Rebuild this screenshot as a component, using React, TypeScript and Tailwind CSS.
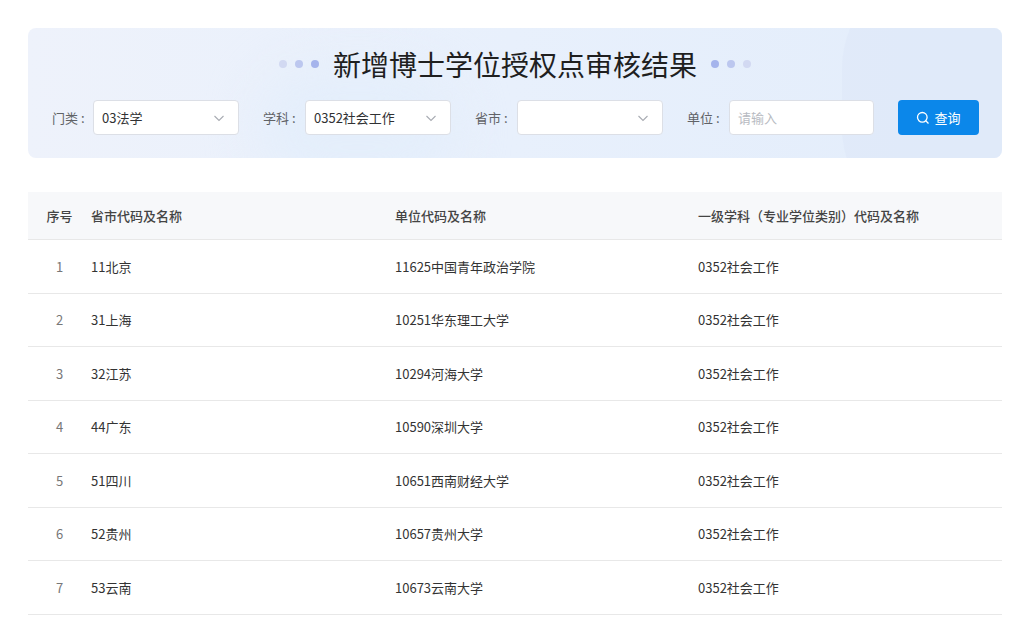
export default function App() {
  const rows = [
    ["1", "11北京", "11625中国青年政治学院"],
    ["2", "31上海", "10251华东理工大学"],
    ["3", "32江苏", "10294河海大学"],
    ["4", "44广东", "10590深圳大学"],
    ["5", "51四川", "10651西南财经大学"],
    ["6", "52贵州", "10657贵州大学"],
    ["7", "53云南", "10673云南大学"],
  ];
  const font = { fontFamily: '"Noto Sans CJK SC", "Noto Sans", sans-serif' };
  const Chevron = () => (
    <svg width="14" height="14" viewBox="0 0 14 14" className="text-[#a8abb2]">
      <path d="M2.5 5l4.5 4.5L11.5 5" fill="none" stroke="currentColor" strokeWidth="1.1" />
    </svg>
  );
  const Select = ({ value }: { value: string }) => (
    <div className="w-[146px] h-[35px] bg-white border border-[#dcdfe6] rounded flex items-center justify-between pl-2 pr-3 text-[13px] text-[#303133]">
      <span>{value}</span>
      <Chevron />
    </div>
  );
  return (
    <div className="w-[1024px] h-[630px] bg-white pt-[28px] px-[28px] overflow-hidden" style={font}>
      <div className="relative h-[130px] w-[974px] rounded-lg overflow-hidden bg-gradient-to-r from-[#eef2fb] via-[#e8f0fc] to-[#e3edfb]">
        <div className="absolute right-[-40px] top-[-60px] w-[200px] h-[260px] rounded-full bg-[#dde8f8] opacity-60"></div>
        <div className="absolute left-[230px] top-[40px] w-[200px] h-[120px] rounded-full bg-[#e4eefb] blur-xl"></div>
        <div className="relative flex flex-col items-center">
          <div className="flex items-center gap-[14px] mt-[17px] h-[38px]">
            <div className="flex gap-[8px]">
              <span className="w-[8px] h-[8px] rounded-full bg-[#d2d9f2]"></span>
              <span className="w-[8px] h-[8px] rounded-full bg-[#bcc7ef]"></span>
              <span className="w-[8px] h-[8px] rounded-full bg-[#a5b4ec]"></span>
            </div>
            <span className="text-[28px] text-[#1f1f1f] leading-none">新增博士学位授权点审核结果</span>
            <div className="flex gap-[8px]">
              <span className="w-[8px] h-[8px] rounded-full bg-[#a5b4ec]"></span>
              <span className="w-[8px] h-[8px] rounded-full bg-[#bcc7ef]"></span>
              <span className="w-[8px] h-[8px] rounded-full bg-[#d2d9f2]"></span>
            </div>
          </div>
        </div>
        <div className="relative flex items-center mt-[17px] pl-[24px] text-[13px] text-[#606266]">
          <span className="w-[41px]">门类 :</span>
          <Select value="03法学" />
          <span className="ml-[24px] w-[42px]">学科 :</span>
          <Select value="0352社会工作" />
          <span className="ml-[24px] w-[42px]">省市 :</span>
          <Select value="" />
          <span className="ml-[24px] w-[42px]">单位 :</span>
          <div className="w-[145px] h-[35px] bg-white border border-[#dcdfe6] rounded flex items-center pl-2 text-[#b8bbc2]">请输入</div>
          <button className="ml-[24px] w-[81px] h-[35px] rounded bg-[#0b87ea] text-white flex items-center justify-center gap-1 text-[13px]">
            <svg width="14" height="14" viewBox="0 0 14 14"><circle cx="6.3" cy="6.3" r="4.8" fill="none" stroke="white" strokeWidth="1.3"/><path d="M9.8 9.8l2.7 2.7" stroke="white" strokeWidth="1.3"/></svg>
            查询
          </button>
        </div>
      </div>
      <div className="mt-[34px] w-[974px] text-[13px]">
        <div className="flex items-center h-[48px] bg-[#f7f8fa] border-b border-[#e8e8e8] text-[#444] font-medium">
          <div className="w-[63px] text-center">序号</div>
          <div className="w-[304px]">省市代码及名称</div>
          <div className="w-[303px]">单位代码及名称</div>
          <div>一级学科（专业学位类别）代码及名称</div>
        </div>
        {rows.map((r) => (
          <div key={r[0]} className="flex items-center h-[53.5px] border-b border-[#e8e8e8] text-[#333]">
            <div className="w-[63px] text-center text-[#777]">{r[0]}</div>
            <div className="w-[304px]">{r[1]}</div>
            <div className="w-[303px]">{r[2]}</div>
            <div>0352社会工作</div>
          </div>
        ))}
      </div>
    </div>
  );
}
